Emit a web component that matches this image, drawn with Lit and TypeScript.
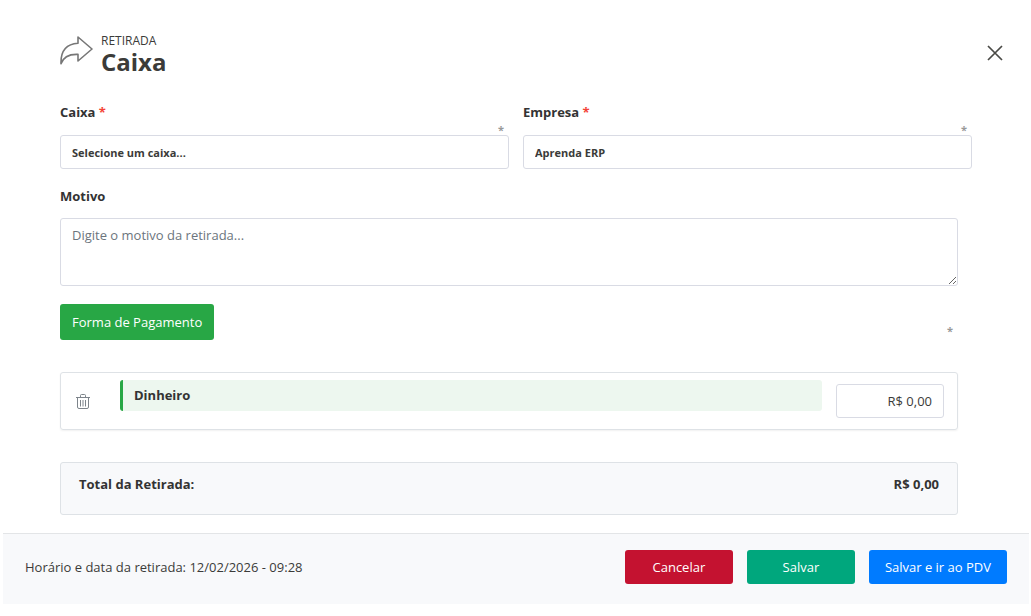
import { LitElement, html, css } from "lit";
import { customElement, property, state } from "lit/decorators.js";

@customElement("required-hint")
class RequiredHint extends LitElement {
  static styles = css`
    :host {
      display: block;
      color: #999999;
      font-size: 11px;
      font-weight: 700;
      line-height: 16px;
      text-align: right;
    }
  `;
  render() {
    return html`<span aria-hidden="true">*</span>`;
  }
}

@customElement("app-root")
class AppRoot extends LitElement {
  @property() timestamp = "12/02/2026 - 09:28";
  @state() private amount = "R$ 0,00";

  static styles = css`
    :host {
      display: block;
      background: #ffffff;
      color: #3b3b39;
      font-family: "Open Sans", "Noto Sans", sans-serif;
      font-size: 13px;
      line-height: 20px;
    }
    * {
      box-sizing: border-box;
    }
    button,
    input,
    select,
    textarea {
      margin: 0;
      font: inherit;
      color: inherit;
    }
    button {
      cursor: pointer;
    }
    .content {
      padding: 32px 59px 18px 60px;
    }
    .header {
      display: flex;
      align-items: center;
      gap: 8px;
      margin: 0 -39px 28px 0;
      height: 42px;
    }
    .arrow {
      width: 33px;
      height: 30px;
      flex: none;
      margin-bottom: 4px;
    }
    .titles {
      flex: 1;
    }
    .kicker {
      font-size: 12px;
      line-height: 18px;
    }
    h1 {
      margin: 0;
      font-size: 24px;
      line-height: 24px;
      font-weight: 700;
    }
    .close {
      width: 32px;
      height: 32px;
      padding: 0;
      border: 0;
      background: none;
      display: grid;
      place-items: center;
    }
    .fields {
      display: grid;
      grid-template-columns: 1fr 1fr;
      gap: 14px;
      margin-bottom: 17px;
    }
    .label {
      display: block;
      font-weight: 700;
      color: #333333;
    }
    .required {
      color: #f44336;
    }
    .fields required-hint {
      margin: 0 5px -3px 0;
    }
    .control {
      display: block;
      width: 100%;
      height: 34px;
      border: 1px solid #d9dbe4;
      border-radius: 3px;
      background: #ffffff;
      outline: none;
    }
    select.control {
      appearance: none;
      padding: 2px 11px 0;
      font-size: 11px;
      font-weight: 700;
    }
    .narrow {
      margin-right: 14px;
    }
    textarea.control {
      height: 68px;
      margin: 12px 0 18px;
      padding: 6px 11px;
      resize: vertical;
    }
    textarea::placeholder {
      color: #6c757d;
      opacity: 1;
    }
    .actions {
      display: flex;
      justify-content: space-between;
      align-items: center;
      margin-bottom: 32px;
    }
    .actions required-hint {
      margin: 18px 5px 0 0;
    }
    .btn {
      height: 34px;
      min-width: 108px;
      padding: 0 16px;
      border: 0;
      border-radius: 3px;
      color: #ffffff;
    }
    .payment {
      height: 36px;
      padding: 0 12px;
      background: #28a745;
    }
    .cancel {
      background: #c41230;
    }
    .save {
      background: #00a77d;
    }
    .pos {
      background: #007bff;
    }
    .card {
      display: flex;
      align-items: flex-start;
      height: 58px;
      padding: 7px 13px 0 14px;
      margin-bottom: 32px;
      border: 1px solid #dee2e6;
      border-radius: 3px;
      box-shadow: 0 1px 2px rgba(0, 0, 0, 0.06);
    }
    .trash {
      width: 16px;
      height: 16px;
      padding: 0;
      margin: 13px 29px 0 0;
      border: 0;
      background: none;
      display: grid;
      place-items: center;
    }
    .method {
      flex: 1;
      height: 31px;
      padding: 5px 11px;
      border-left: 3px solid #28a745;
      border-radius: 3px;
      background: #edf7ef;
      color: #333333;
      font-weight: 700;
    }
    input.control {
      width: 108px;
      margin: 4px 0 0 14px;
      padding: 0 11px;
      text-align: right;
    }
    .total {
      display: flex;
      justify-content: space-between;
      height: 53px;
      padding: 11px 18px;
      border: 1px solid #dee2e6;
      border-radius: 3px;
      background: #f8f9fb;
      color: #333333;
      font-weight: 700;
    }
    .footer {
      display: flex;
      align-items: center;
      justify-content: space-between;
      gap: 14px;
      margin: 0 2px 0 3px;
      padding: 16px 22px 20px;
      border-top: 1px solid #e3e5e7;
      background: #f8f9fb;
    }
    .buttons {
      display: flex;
      gap: 14px;
    }
    svg {
      display: block;
      fill: none;
    }
  `;

  render() {
    return html`
      <main class="content">
        <header class="header">
          <svg class="arrow" viewBox="0 0 33 30" stroke="#777777" stroke-width="1.6" stroke-linejoin="round">
            <path d="M1 27.8C0.5 14.5 6 8 18 7.2V1L32 13L18 25V18.4C9.5 18 3.5 20.5 1 27.8Z" />
          </svg>
          <div class="titles">
            <div class="kicker">RETIRADA</div>
            <h1>Caixa</h1>
          </div>
          <button class="close" type="button" aria-label="Fechar">
            <svg width="16" height="16" viewBox="0 0 16 16" stroke="#4a4a46" stroke-width="1.7">
              <path d="M1 1L15 15M15 1L1 15" />
            </svg>
          </button>
        </header>

        <div class="fields">
          <div>
            <label class="label" for="caixa">Caixa <span class="required">*</span></label>
            <required-hint></required-hint>
            <select class="control" id="caixa" required>
              <option>Selecione um caixa...</option>
            </select>
          </div>
          <div>
            <label class="label" for="empresa">Empresa <span class="required">*</span></label>
            <required-hint></required-hint>
            <select class="control" id="empresa" required>
              <option>Aprenda ERP</option>
            </select>
          </div>
        </div>

        <div class="narrow">
          <label class="label" for="motivo">Motivo</label>
          <textarea class="control" id="motivo" placeholder="Digite o motivo da retirada..."></textarea>

          <div class="actions">
            <button class="btn payment" type="button">Forma de Pagamento</button>
            <required-hint></required-hint>
          </div>

          <div class="card">
            <button class="trash" type="button" aria-label="Remover">
              <svg width="14" height="15" viewBox="0 0 14 15" stroke="#7d848b">
                <path d="M0 3.5H14M4.5 3V1.5Q4.5 0.5 5.5 0.5H8.5Q9.5 0.5 9.5 1.5V3M1.5 4V13Q1.5 14.5 3 14.5H11Q12.5 14.5 12.5 13V4M4.5 6V12.5M7 6V12.5M9.5 6V12.5" />
              </svg>
            </button>
            <label class="method" for="valor">Dinheiro</label>
            <input class="control" id="valor" type="text" .value=${this.amount}
              @input=${(e: Event) => (this.amount = (e.target as HTMLInputElement).value)} />
          </div>

          <div class="total"><span>Total da Retirada:</span><span>${this.amount}</span></div>
        </div>
      </main>
      <footer class="footer">
        <span>Horário e data da retirada: ${this.timestamp}</span>
        <div class="buttons">
          <button class="btn cancel" type="button">Cancelar</button>
          <button class="btn save" type="button">Salvar</button>
          <button class="btn pos" type="button">Salvar e ir ao PDV</button>
        </div>
      </footer>
    `;
  }
}
